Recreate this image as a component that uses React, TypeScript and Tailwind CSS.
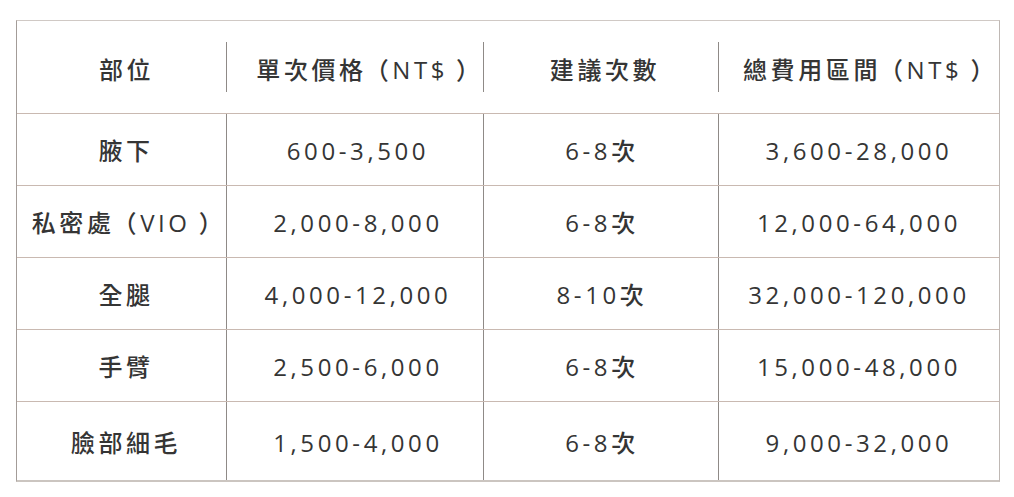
import React from "react";

const L = () => <span className="ml-[10px] [font-feature-settings:'halt']">（</span>;
const R = () => <span className="ml-[8px] [font-feature-settings:'halt']">）</span>;

const header: React.ReactNode[] = [
  "部位",
  <>單次價格<L />NT$<R /></>,
  "建議次數",
  <>總費用區間<L />NT$<R /></>,
];
const rows: React.ReactNode[][] = [
  ["腋下", "600-3,500", "6-8次", "3,600-28,000"],
  [<>私密處<L />VIO<R /></>, "2,000-8,000", "6-8次", "12,000-64,000"],
  ["全腿", "4,000-12,000", "8-10次", "32,000-120,000"],
  ["手臂", "2,500-6,000", "6-8次", "15,000-48,000"],
  ["臉部細毛", "1,500-4,000", "6-8次", "9,000-32,000"],
];

const widths = ["w-[209px]", "w-[256px]", "w-[234px]", "w-[280px]"];
const headPad = ["pl-[10px]", "pl-[18px]", "pl-[8px]", "pl-[11px]"];
const bodyPad = ["pl-[9px]", "pl-[6px]", "pl-[2px]", "pl-[0px]"];

export default function App() {
  return (
    <div className="w-[1014px] h-[497px] bg-white pt-[20px] pl-[16px] text-[#353535] font-medium font-['Open_Sans','Noto_Sans_CJK_TC',sans-serif] text-[24px] tracking-[0.15em]">
      <div className="w-[984px] border-t border-t-[#d0c9c5] border-l border-l-[#a39c98] border-r border-r-[#bfb8b4] border-b-2 border-b-[#cbc5c0]">
        <div className="flex h-[93px] border-b border-b-[#c9b9b1]">
          {header.map((h, i) => (
            <React.Fragment key={i}>
              {i > 0 && <div className="w-px h-[50px] mt-[21px] bg-[#8f8a87]" />}
              <div className={`${widths[i]} ${headPad[i]} flex items-center justify-center pt-[6px] leading-none whitespace-nowrap`}>
                <span>{h}</span>
              </div>
            </React.Fragment>
          ))}
        </div>
        {rows.map((r, ri) => (
          <div
            key={ri}
            className={`flex ${ri === rows.length - 1 ? "h-[78px]" : "h-[72px] border-b border-b-[#c9b9b1]"}`}
          >
            {r.map((c, ci) => (
              <React.Fragment key={ci}>
                {ci > 0 && <div className="w-px bg-[#8f8a87]" />}
                <div
                  className={`${widths[ci]} ${ri === 1 && ci === 0 ? "pl-[3px]" : bodyPad[ci]} flex items-center justify-center pt-[3px] leading-none whitespace-nowrap`}
                >
                  <span>{c}</span>
                </div>
              </React.Fragment>
            ))}
          </div>
        ))}
      </div>
    </div>
  );
}
